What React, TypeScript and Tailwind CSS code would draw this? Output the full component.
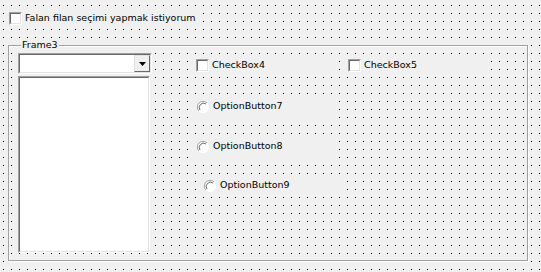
import React from 'react';

const font = 'font-["DejaVu_Sans",sans-serif] text-[9.5px] text-black';

const CheckMark: React.FC = () => (
  <span className="block w-[13px] h-[13px] shrink-0 border border-t-[#a0a0a0] border-l-[#a0a0a0] border-r-white border-b-white">
    <span className="block w-full h-full bg-white border border-t-[#696969] border-l-[#696969] border-r-[#e3e3e3] border-b-[#e3e3e3]" />
  </span>
);

const RadioMark: React.FC = () => (
  <svg width="12" height="12" viewBox="0 0 12 12" className="shrink-0">
    <circle cx="6" cy="6" r="5.5" fill="#fff" />
    <path d="M10 2 A5.5 5.5 0 0 0 2 10" fill="none" stroke="#a0a0a0" strokeWidth="1" />
    <path d="M9 3 A4.3 4.3 0 0 0 3 9" fill="none" stroke="#696969" strokeWidth="1" />
    <path d="M10 2 A5.5 5.5 0 0 1 2 10" fill="none" stroke="#fff" strokeWidth="1" />
  </svg>
);

interface ControlProps {
  label: string;
  kind: 'check' | 'radio';
  className: string;
}

const Control: React.FC<ControlProps> = ({ label, kind, className }) => (
  <div className={`flex items-center bg-[#f0f0f0] ${className}`}>
    {kind === 'check' ? <CheckMark /> : <RadioMark />}
    <span className={`${font} ${kind === 'check' ? 'ml-[3px]' : 'ml-[4px]'} whitespace-nowrap`}>{label}</span>
  </div>
);

export default function App() {
  return (
    <div className="w-[541px] h-[272px] overflow-hidden bg-[#f0f0f0] bg-[conic-gradient(at_1px_1px,transparent_75%,#000_0)] bg-[length:8px_8px] bg-[position:3px_5px] pt-[8px] pl-[6px]">
      <Control kind="check" label="Falan filan seçimi yapmak istiyorum" className="w-[194px] h-[20px] pl-[3px]" />

      <div className="relative mt-[17px] ml-[2px] w-[520px] h-[216px] border border-[#a0a0a0] shadow-[1px_1px_0_#fff,inset_1px_1px_0_#fff]">
        <span className={`absolute left-[12px] -top-[7px] px-px bg-[#f0f0f0] leading-[12px] ${font}`}>Frame3</span>

        <div className="flex pt-[7px] pl-[9px]">
          <div className="flex flex-col gap-[2px] w-[134px]">
            <div className="h-[21px] flex border border-t-[#a0a0a0] border-l-[#a0a0a0] border-r-white border-b-white">
              <div className="flex-1 flex border border-t-[#696969] border-l-[#696969] border-r-[#e3e3e3] border-b-[#e3e3e3] bg-white">
                <div className="flex-1" />
                <div className="w-[16px] h-full flex items-center justify-center bg-[#f0f0f0] border border-t-[#e3e3e3] border-l-[#e3e3e3] border-r-[#696969] border-b-[#696969]">
                  <svg width="7" height="4" viewBox="0 0 7 4"><path d="M0 0h7L3.5 4z" fill="#000" /></svg>
                </div>
              </div>
            </div>
            <div className="w-[132px] h-[177px] border border-t-[#a0a0a0] border-l-[#a0a0a0] border-r-white border-b-white">
              <div className="w-full h-full bg-white border border-t-[#696969] border-l-[#696969] border-r-[#e3e3e3] border-b-[#e3e3e3]" />
            </div>
          </div>

          <div className="ml-[38px] mt-[1px] flex flex-col">
            <div className="flex gap-[6px]">
              <Control kind="check" label="CheckBox4" className="w-[147px] h-[23px] pl-[6px]" />
              <Control kind="check" label="CheckBox5" className="w-[145px] h-[23px] pl-[5px]" />
            </div>
            <Control kind="radio" label="OptionButton7" className="mt-[18px] w-[147px] h-[23px] pl-[7px]" />
            <Control kind="radio" label="OptionButton8" className="mt-[17px] w-[147px] h-[23px] pl-[7px]" />
            <Control kind="radio" label="OptionButton9" className="mt-[16px] ml-[9px] w-[146px] h-[23px] pl-[5px]" />
          </div>
        </div>
      </div>
    </div>
  );
}
